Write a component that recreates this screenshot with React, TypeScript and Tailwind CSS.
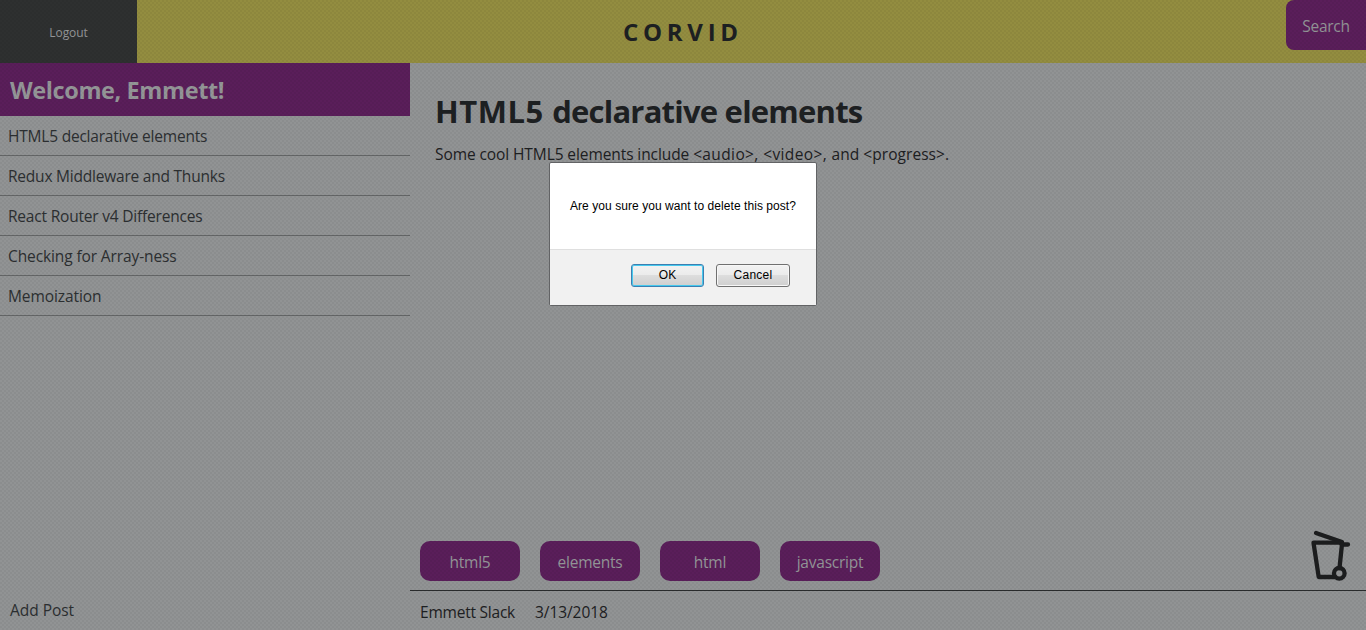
const posts = [
  { title: 'HTML5 declarative elements', spacing: 'tracking-[-0.21px]' },
  { title: 'Redux Middleware and Thunks', spacing: 'tracking-[-0.22px]' },
  { title: 'React Router v4 Differences', spacing: 'tracking-[-0.2px]' },
  { title: 'Checking for Array-ness', spacing: 'tracking-[-0.11px]' },
  { title: 'Memoization', spacing: 'tracking-[-0.08px]' },
];

const tags = [
  { name: 'html5', spacing: 'tracking-[-0.25px]' },
  { name: 'elements', spacing: 'tracking-[-0.25px]' },
  { name: 'html', spacing: 'tracking-[-0.25px]' },
  { name: 'javascript', spacing: 'tracking-[-0.22px]' },
];

function TrashIcon() {
  return (
    <svg className="mr-[14px] block h-[52px] w-[42px]" viewBox="0 0 42 52" fill="none" stroke="#1c1d1e" strokeWidth="4.300" strokeLinecap="round" strokeLinejoin="round">
      <path d="M6 3 L32 12" />
      <path d="M38 14.500 H32 L30 12.700 H3.500 L8.700 47 H25" />
      <path d="M32 14 L29.500 38" />
      <circle cx="29.300" cy="43.300" r="5.300" />
    </svg>
  );
}

function Header() {
  return (
    <header className="flex h-[63px] bg-[#938d40]">
      <button className="w-[137px] bg-[#2e3030] pt-[3px] text-[12px] text-[#949698] font-['Open_Sans',sans-serif]">
        <span className="tracking-[-0.1px]">Logout</span>
      </button>
      <h1 className="grow pl-[486px] pt-[15px] text-[24px] leading-[34px] font-bold tracking-[4.7px]"><span>CORVID</span></h1>
      <button className="h-[50px] w-[80px] rounded-l-[8px] bg-[#5a1e5a] pt-[4px] text-[15.5px] text-[#929496]"><span className="tracking-[-0.25px]">Search</span></button>
    </header>
  );
}

function ConfirmDialog() {
  return (
    <div className="absolute top-[162px] left-[549px] flex h-[144px] w-[268px] flex-col rounded-[2px] border border-[#626365] bg-white font-['Liberation_Sans',Arial,sans-serif] text-black">
      <p className="h-[86px] pt-[35px] pl-[20px] text-[12px] leading-[16px] tracking-[0.06px] whitespace-nowrap"><span>Are you sure you want to delete this post?</span></p>
      <div className="flex grow justify-end gap-[12px] border-t border-[#dfdfdf] bg-[#f1f1f1] pt-[14px] pr-[26px] text-[12px]">
        <button className="h-[23px] w-[73px] rounded-[3px] border border-[#3c7fb1] bg-[linear-gradient(#f2f2f2,#ebebeb_50%,#dddddd_50%,#cfcfcf)] pb-px leading-[18px] shadow-[inset_0_0_0_1px_#46c9ee]">OK</button>
        <button className="h-[23px] w-[74px] rounded-[3px] border border-[#707070] bg-[linear-gradient(#f2f2f2,#ebebeb_50%,#dddddd_50%,#cfcfcf)] pb-px leading-[18px] tracking-[0.25px] shadow-[inset_0_0_0_1px_#f7f7f7]">Cancel</button>
      </div>
    </div>
  );
}

export default function App() {
  return (
    <div className="relative flex h-[630px] w-[1366px] flex-col overflow-hidden bg-[#919394] font-['Open_Sans','Noto_Sans',sans-serif] text-[15.5px] text-[#1d2022]">
      <Header />
      <div className="flex grow">
        <aside className="flex w-[410px] flex-col text-[#2c2f31]">
          <h2 className="h-[53px] bg-[#5a1e5a] pt-[10px] pl-[10px] text-[23.5px] leading-[34px] font-bold tracking-[-0.4px] text-[#949698]"><span>Welcome, Emmett!</span></h2>
          <ul>
            {posts.map((post) => (
              <li key={post.title} className="h-[40px] border-b border-[#646667] pt-[8px] pl-[8px] leading-[24px]">
                <span className={post.spacing}>{post.title}</span>
              </li>
            ))}
          </ul>
          <button className="mt-auto h-[40px] pt-[2px] pl-[10px] text-left"><span className="tracking-[-0.03px]">Add Post</span></button>
        </aside>
        <main className="flex grow flex-col">
          <h2 className="pt-[26px] pl-[25px] text-[31px] leading-[44px] font-bold tracking-[-0.78px]"><span className="tracking-[0.5px]">HTML5 </span>declarative elements</h2>
          <p className="pt-[9px] pl-[25px] leading-[24px] tracking-[-0.09px]">Some cool HTML5 elements include <span className="tracking-[0.38px]">&lt;audio&gt;, &lt;video&gt;, </span><span className="tracking-[0.05px]">and &lt;progress&gt;.</span></p>
          <div className="mt-auto flex items-end justify-between">
            <ul className="flex gap-[20px] pb-[9px] pl-[10px]">
              {tags.map((tag) => (
                <li key={tag.name} className="flex h-[40px] w-[100px] items-center justify-center rounded-[10px] bg-[#5a1e5a] pt-[3px] text-[#949698]"><span className={tag.spacing}>{tag.name}</span></li>
              ))}
            </ul>
            <div className="pb-[8px]"><TrashIcon /></div>
          </div>
          <footer className="flex h-[40px] gap-[20px] border-t border-[#2a2c2d] pt-[9px] pl-[10px] leading-[24px]">
            <span className="tracking-[-0.22px]">Emmett Slack</span>
            <span className="tracking-[-0.08px]">3/13/2018</span>
          </footer>
        </main>
      </div>
      <div className="pointer-events-none absolute inset-0 bg-[conic-gradient(rgba(0,0,0,0.045)_25%,transparent_25%_50%,rgba(0,0,0,0.045)_50%_75%,transparent_75%)] bg-size-[4px_4px]" />
      <ConfirmDialog />
    </div>
  );
}
